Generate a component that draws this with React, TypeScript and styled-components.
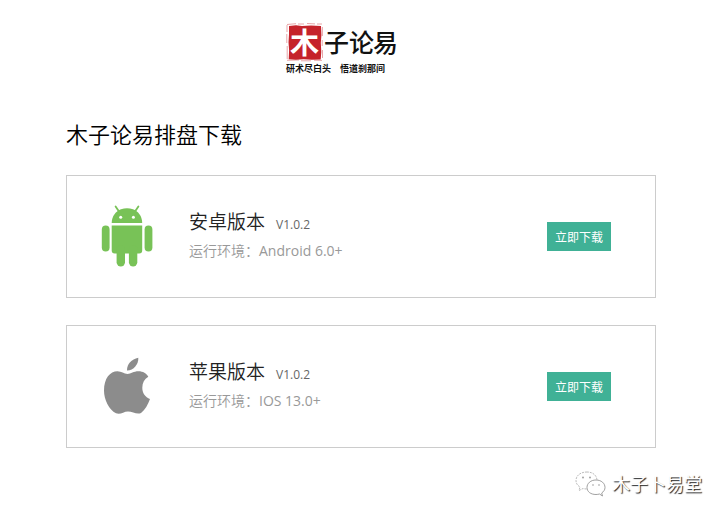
import React from "react";
import styled, { createGlobalStyle } from "styled-components";

const GlobalStyle = createGlobalStyle`
  * { box-sizing: border-box; }
  body {
    margin: 0;
    background: #fff;
    color: #000;
    font-family: "Open Sans", "Noto Sans CJK SC", sans-serif;
  }
`;

const Page = styled.div`
  display: flex;
  flex-direction: column;
  padding: 20px 0 16px;
`;

const Header = styled.header`
  display: flex;
  justify-content: center;
  padding-right: 40px;
`;

const Logo = styled.svg`
  display: block;
  width: 116px;
  height: 56px;
`;

const Main = styled.main`
  display: flex;
  flex-direction: column;
  padding: 41px 70px 0 66px;
`;

const Title = styled.h1`
  margin: 0 0 26px;
  font-size: 22px;
  line-height: 32px;
  font-weight: 350;
  font-family: "Noto Sans CJK SC", sans-serif;
`;

const Cards = styled.ul`
  display: flex;
  flex-direction: column;
  gap: 27px;
  margin: 0;
  padding: 0;
  list-style: none;
`;

const Card = styled.li`
  display: flex;
  align-items: center;
  min-height: 123px;
  padding: 0 44px 0 30px;
  border: 1px solid #ccc;
`;

const PlatformIcon = styled.svg`
  flex: none;
  width: 60px;
  height: 64px;
  margin-right: 32px;
`;

const Details = styled.div`
  flex: 1;
  min-width: 0;
`;

const NameRow = styled.div`
  display: flex;
  align-items: baseline;
  gap: 11px;
`;

const Name = styled.h2`
  margin: 0;
  color: #222;
  font-size: 19px;
  line-height: 28px;
  font-weight: 350;
`;

const Version = styled.span`
  color: #666;
  font-size: 12px;
  line-height: 20px;
`;

const Environment = styled.p`
  margin: 0;
  color: #999;
  font-family: "Noto Sans CJK SC", sans-serif;
  font-size: 14px;
  line-height: 28px;
  font-weight: 350;
`;

const EnvironmentValue = styled.span`
  font-family: "Open Sans", sans-serif;
  font-weight: 400;
`;

const DownloadButton = styled.button`
  flex: none;
  height: 29px;
  padding: 0 8px;
  border: 0;
  background: #40b196;
  color: #fff;
  font-family: "Noto Sans CJK SC", sans-serif;
  font-size: 12px;
  line-height: 29px;
  cursor: pointer;
`;

const Account = styled.footer`
  display: flex;
  align-items: center;
  justify-content: flex-end;
  gap: 5px;
  padding: 21px 24px 0 0;
`;

const AccountIcon = styled.svg`
  width: 32px;
  height: 28px;
`;

const AccountName = styled.span`
  color: #fff;
  font-family: "Noto Sans CJK SC", sans-serif;
  font-size: 18px;
  line-height: 26px;
  text-shadow: 1px 1px 1px #222;
`;

const BrandLogo = () => (
  <Logo viewBox="0 0 116 56" role="img" aria-label="木子论易">
    <path
      d="M4 6l7-.8 6 .8 9-.6 10 .5.4 9-.6 8 .5 9-.6 7.500-9 .3-8-.5-8 .6-7-.6.4-9-.6-8 .5-8z"
      fill="#c5232b"
    />
    <path
      d="M2 4.500l9-.8M13 4h6M22 3.500l8 .4M32 4h5M2 5v7M1.800 14v9M2.200 26v13M2 40.300l12-.3M16 40.800h10M29 40.200l8 .2M37.400 7v9M37.200 20v6M37.500 30v8"
      stroke="#c5232b"
      strokeOpacity=".45"
      strokeWidth=".9"
      fill="none"
    />
    <g fontFamily="'Noto Sans CJK SC', sans-serif" fontWeight="700">
      <text x="5" y="34" fontSize="29" fill="#fff">木</text>
      <text x="39" y="32" fontSize="25" fontWeight="500" fill="#111">子</text>
      <text x="64" y="32" fontSize="25" fontWeight="500" fill="#111">论</text>
      <text x="88" y="32" fontSize="25" fontWeight="500" fill="#111">易</text>
      <text x="1" y="52" fontSize="9" fill="#111">研术尽白头</text>
      <text x="55" y="52" fontSize="9" fill="#111">悟道刹那间</text>
    </g>
  </Logo>
);

const AndroidIcon = () => (
  <PlatformIcon viewBox="0 0 60 64" aria-hidden="true">
    <g fill="#78c257">
      <path d="M14.700 18C14.700 11 19 6 24 4.200c4-1.400 8-1.400 12 0 5 1.800 9.200 6.800 9.200 13.800z" />
      <path d="M22 6.500L18.600 1.400M38 6.500l3.400-5.100" stroke="#78c257" strokeWidth="1.800" strokeLinecap="round" />
      <path d="M14.700 20.500h30.500V45.500a3 3 0 0 1-3 3H17.700a3 3 0 0 1-3-3z" />
      <rect x="4.800" y="20.500" width="7.800" height="26" rx="3.900" />
      <rect x="47.600" y="20.500" width="7.800" height="26" rx="3.900" />
      <rect x="19.600" y="40" width="8.400" height="21.500" rx="4.200" />
      <rect x="31.900" y="40" width="8.400" height="21.500" rx="4.200" />
    </g>
    <circle cx="23.700" cy="12.200" r="1.500" fill="#fff" />
    <circle cx="36.400" cy="12.200" r="1.500" fill="#fff" />
  </PlatformIcon>
);

const AppleIcon = () => (
  <PlatformIcon viewBox="0 0 60 64" aria-hidden="true">
    <g fill="#8c8c8c">
      <path d="M30.500 19c3.500 0 6-2.700 11-2.700 4.500 0 8 2.200 9.800 5.400-4 2.300-6 6.300-6 11 0 5.300 3 9.500 7.700 11.300-2 5.500-5 11-9 14-4 2-8.500-1.500-13-1.500s-7.500 3.500-12 1.800C12 55 7 44.500 7 35.500 7 23.500 13 16.300 20.500 16.300c4 0 6.500 2.700 10 2.700z" />
      <path d="M30 15.500C29.800 9 34.500 4 41.300 2.700 41.800 9 36.500 15.600 30 15.500z" />
    </g>
  </PlatformIcon>
);

const WechatIcon = () => (
  <AccountIcon viewBox="0 0 32 28" aria-hidden="true">
    <g fill="#fff" strokeWidth=".8" strokeLinejoin="round">
      <path stroke="#aaa" strokeDasharray="2 1" d="M12 3C5.500 3 1 6.500 1 11.500c0 3 1.500 5 4 6.500l-1 3.500 4-2c1.300.4 2.600.5 4 .5 6.500 0 10-4 10-8.500S18.500 3 12 3z" />
      <path stroke="#888" d="M21 11c-5.300 0-9 3.300-9 7.500s3.700 7 9 7c1.200 0 2.300-.2 3.500-.5l3 2-.8-3c2-1.400 3.300-3.200 3.300-5.500 0-4.200-3.700-7.500-9-7.500z" />
    </g>
    <g fill="#999">
      <circle cx="8" cy="8.500" r=".9" />
      <circle cx="15" cy="8.500" r=".9" />
      <circle cx="18" cy="16" r=".8" />
      <circle cx="24" cy="16" r=".8" />
    </g>
  </AccountIcon>
);

const releases = [
  { name: "安卓版本", version: "V1.0.2", environment: "Android 6.0+", Icon: AndroidIcon },
  { name: "苹果版本", version: "V1.0.2", environment: "IOS 13.0+", Icon: AppleIcon },
];

export default function App() {
  return (
    <>
      <GlobalStyle />
      <Page>
        <Header>
          <BrandLogo />
        </Header>
        <Main>
          <Title>木子论易排盘下载</Title>
          <Cards>
            {releases.map(({ name, version, environment, Icon }) => (
              <Card key={name}>
                <Icon />
                <Details>
                  <NameRow>
                    <Name>{name}</Name>
                    <Version>{version}</Version>
                  </NameRow>
                  <Environment>
                    运行环境：<EnvironmentValue>{environment}</EnvironmentValue>
                  </Environment>
                </Details>
                <DownloadButton type="button">立即下载</DownloadButton>
              </Card>
            ))}
          </Cards>
        </Main>
        <Account>
          <WechatIcon />
          <AccountName>木子卜易堂</AccountName>
        </Account>
      </Page>
    </>
  );
}
